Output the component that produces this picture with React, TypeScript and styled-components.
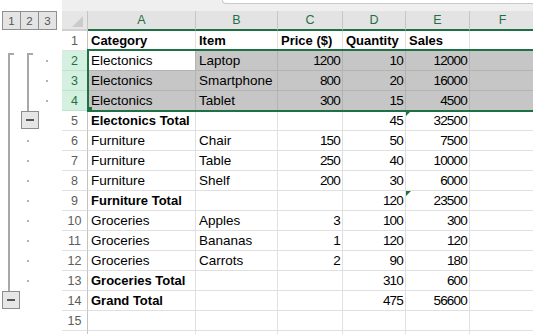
import styled, { createGlobalStyle, css } from "styled-components";

const GREEN = "#1e7145";
const COLS = "62px 26px 108px 82px 65px 63px 64px 66px";

type LaneKind = "none" | "cap" | "line" | "dot" | "minus";

type RowSpec = {
  n: number;
  cells: string[];
  lanes: LaneKind[];
  bold?: "row" | "label";
  flag?: boolean;
  hideNumber?: boolean;
};

const GlobalStyle = createGlobalStyle`
  html, body { margin: 0; padding: 0; background: #fff; }
  body { font-family: "Liberation Sans", Arial, sans-serif; }
`;

const Sheet = styled.div`
  width: 533px;
  height: 334px;
  overflow: hidden;
  background: #fff;
  position: relative;
`;

const TopStrip = styled.div`
  display: flex;
  height: 11px;
`;

const TopBlank = styled.div`
  width: 62px;
  flex: none;
  background: #fff;
`;

const TopBar = styled.div`
  flex: 1;
  display: flex;
  align-items: flex-start;
  background: #efefef;
`;

const FormulaEdge = styled.div`
  margin-left: 160px;
  flex: 1;
  height: 3px;
  background: #fff;
  border-left: 1px solid #c9c9c9;
  border-bottom: 1px solid #c9c9c9;
  border-bottom-left-radius: 4px;
`;

const GridRow = styled.div`
  display: grid;
  grid-template-columns: ${COLS};
  height: 20px;
  width: max-content;
`;

const LevelBar = styled.div`
  display: flex;
  align-items: flex-start;
  padding-left: 2px;
  background: #fff;
`;

const LevelButton = styled.div`
  width: 19px;
  height: 19px;
  box-sizing: border-box;
  border: 1px solid #8f8f8f;
  margin-right: -1px;
  background: #e4e4e4;
  color: #555;
  font-size: 11.5px;
  display: flex;
  align-items: center;
  justify-content: center;
`;

const Corner = styled.div`
  position: relative;
  background: #e6e6e6;
  border-right: 1px solid #c4c4c4;
  border-bottom: 2px solid #d0d0d0;
  box-sizing: border-box;

  &::after {
    content: "";
    position: absolute;
    right: 4px;
    bottom: 2px;
    width: 11px;
    height: 11px;
    background: #cbcbcb;
    clip-path: polygon(100% 0, 100% 100%, 0 100%);
  }
`;

const ColHead = styled.div`
  background: #e3e3e3;
  border-right: 1px solid #c6c6c6;
  border-bottom: 2px solid ${GREEN};
  box-sizing: border-box;
  color: ${GREEN};
  font-size: 12.5px;
  display: flex;
  align-items: center;
  justify-content: center;
`;

const Gutter = styled.div`
  display: flex;
  padding-left: 2px;
  background: #fff;
`;

const Lane = styled.div<{ $kind: LaneKind }>`
  position: relative;
  width: 19px;
  flex: none;

  ${({ $kind }) =>
    $kind === "line" &&
    css`
      &::before {
        content: "";
        position: absolute;
        left: 6px;
        top: 0;
        bottom: 0;
        width: 2px;
        background: #a8a8a8;
      }
    `}

  ${({ $kind }) =>
    $kind === "cap" &&
    css`
      &::before {
        content: "";
        position: absolute;
        left: 6px;
        top: 2px;
        bottom: 0;
        width: 2px;
        background: #a8a8a8;
      }
      &::after {
        content: "";
        position: absolute;
        left: 6px;
        top: 2px;
        width: 6px;
        height: 2px;
        background: #a8a8a8;
      }
    `}

  ${({ $kind }) =>
    $kind === "dot" &&
    css`
      &::before {
        content: "";
        position: absolute;
        left: 6px;
        top: 9px;
        width: 2px;
        height: 2px;
        background: #b2b2b2;
      }
    `}
`;

const Collapse = styled.div`
  width: 18px;
  height: 18px;
  box-sizing: border-box;
  border: 1px solid #8d8d8d;
  background: #e6e6e6;
  display: flex;
  align-items: center;
  justify-content: center;

  &::before {
    content: "";
    width: 8px;
    height: 2px;
    background: #555;
  }
`;

const RowHead = styled.div<{ $selected?: boolean }>`
  background: ${({ $selected }) => ($selected ? "#d3f0e0" : "#fff")};
  color: ${({ $selected }) => ($selected ? GREEN : "#5c5c5c")};
  border-right: 1px solid #c2c2c2;
  border-bottom: 1px solid ${({ $selected }) => ($selected ? "#bfe3cf" : "#e1e1e1")};
  box-sizing: border-box;
  font-size: 12.5px;
  display: flex;
  align-items: center;
  justify-content: center;
`;

const Cell = styled.div<{
  $selected?: boolean;
  $active?: boolean;
  $bold?: boolean;
  $numeric?: boolean;
  $flag?: boolean;
}>`
  position: relative;
  box-sizing: border-box;
  padding: 1px 3px 0;
  line-height: 18px;
  white-space: nowrap;
  overflow: hidden;
  color: #000;
  font-size: ${({ $bold }) => ($bold ? "13px" : "13.5px")};
  font-weight: ${({ $bold }) => ($bold ? 700 : 400)};
  background: ${({ $selected, $active }) => ($selected && !$active ? "#c6c6c6" : "#fff")};
  border-right: 1px solid ${({ $selected }) => ($selected ? "#b3b3b3" : "#e0e0e0")};
  border-bottom: 1px solid ${({ $selected }) => ($selected ? "#b3b3b3" : "#e0e0e0")};

  ${({ $numeric }) =>
    $numeric &&
    css`
      text-align: right;
      letter-spacing: -0.8px;
      padding-right: 2px;
    `}

  ${({ $flag }) =>
    $flag &&
    css`
      &::before {
        content: "";
        position: absolute;
        left: 0;
        top: 0;
        width: 5px;
        height: 5px;
        background: ${GREEN};
        clip-path: polygon(0 0, 100% 0, 0 100%);
      }
    `}
`;

const SelectedGroup = styled.div`
  position: relative;

  &::after {
    content: "";
    position: absolute;
    left: 87px;
    top: -2px;
    right: -4px;
    bottom: -1px;
    border: 2px solid ${GREEN};
    pointer-events: none;
    z-index: 2;
  }

  &::before {
    content: "";
    position: absolute;
    left: 87px;
    bottom: -1px;
    width: 5px;
    height: 5px;
    background: ${GREEN};
    z-index: 3;
  }
`;

const LETTERS = ["A", "B", "C", "D", "E", "F"];

const ROWS: RowSpec[] = [
  { n: 1, cells: ["Category", "Item", "Price ($)", "Quantity", "Sales", ""], lanes: [], bold: "row" },
  { n: 2, cells: ["Electonics", "Laptop", "1200", "10", "12000", ""], lanes: ["cap", "cap", "dot"] },
  { n: 3, cells: ["Electonics", "Smartphone", "800", "20", "16000", ""], lanes: ["line", "line", "dot"] },
  { n: 4, cells: ["Electonics", "Tablet", "300", "15", "4500", ""], lanes: ["line", "line", "dot"] },
  { n: 5, cells: ["Electonics Total", "", "", "45", "32500", ""], lanes: ["line", "minus"], bold: "label", flag: true },
  { n: 6, cells: ["Furniture", "Chair", "150", "50", "7500", ""], lanes: ["line", "dot"] },
  { n: 7, cells: ["Furniture", "Table", "250", "40", "10000", ""], lanes: ["line", "dot"] },
  { n: 8, cells: ["Furniture", "Shelf", "200", "30", "6000", ""], lanes: ["line", "dot"] },
  { n: 9, cells: ["Furniture Total", "", "", "120", "23500", ""], lanes: ["line", "dot"], bold: "label", flag: true },
  { n: 10, cells: ["Groceries", "Apples", "3", "100", "300", ""], lanes: ["line", "dot"] },
  { n: 11, cells: ["Groceries", "Bananas", "1", "120", "120", ""], lanes: ["line", "dot"] },
  { n: 12, cells: ["Groceries", "Carrots", "2", "90", "180", ""], lanes: ["line", "dot"] },
  { n: 13, cells: ["Groceries Total", "", "", "310", "600", ""], lanes: ["line", "dot"], bold: "label" },
  { n: 14, cells: ["Grand Total", "", "", "475", "56600", ""], lanes: ["minus"], bold: "label" },
  { n: 15, cells: ["", "", "", "", "", ""], lanes: [] },
  { n: 16, cells: ["", "", "", "", "", ""], lanes: [], hideNumber: true },
];

const isSelected = (n: number) => n >= 2 && n <= 4;

function SheetRow({ row }: { row: RowSpec }) {
  const selected = isSelected(row.n);
  return (
    <GridRow>
      <Gutter>
        {row.lanes.map((kind, i) => (
          <Lane key={i} $kind={kind}>
            {kind === "minus" && <Collapse />}
          </Lane>
        ))}
      </Gutter>
      <RowHead $selected={selected}>{row.hideNumber ? "" : row.n}</RowHead>
      {row.cells.map((value, i) => (
        <Cell
          key={i}
          $selected={selected}
          $active={row.n === 2 && i === 0}
          $bold={row.bold === "row" || (row.bold === "label" && i === 0)}
          $numeric={/^\d+$/.test(value)}
          $flag={row.flag && i === 4}
        >
          {value}
        </Cell>
      ))}
    </GridRow>
  );
}

export default function App() {
  const before = ROWS.filter((r) => r.n < 2);
  const chosen = ROWS.filter((r) => isSelected(r.n));
  const after = ROWS.filter((r) => r.n > 4);

  return (
    <>
      <GlobalStyle />
      <Sheet>
        <TopStrip>
          <TopBlank />
          <TopBar>
            <FormulaEdge />
          </TopBar>
        </TopStrip>

        <GridRow>
          <LevelBar>
            <LevelButton>1</LevelButton>
            <LevelButton>2</LevelButton>
            <LevelButton>3</LevelButton>
          </LevelBar>
          <Corner />
          {LETTERS.map((l) => (
            <ColHead key={l}>{l}</ColHead>
          ))}
        </GridRow>

        {before.map((r) => (
          <SheetRow key={r.n} row={r} />
        ))}
        <SelectedGroup>
          {chosen.map((r) => (
            <SheetRow key={r.n} row={r} />
          ))}
        </SelectedGroup>
        {after.map((r) => (
          <SheetRow key={r.n} row={r} />
        ))}
      </Sheet>
    </>
  );
}
